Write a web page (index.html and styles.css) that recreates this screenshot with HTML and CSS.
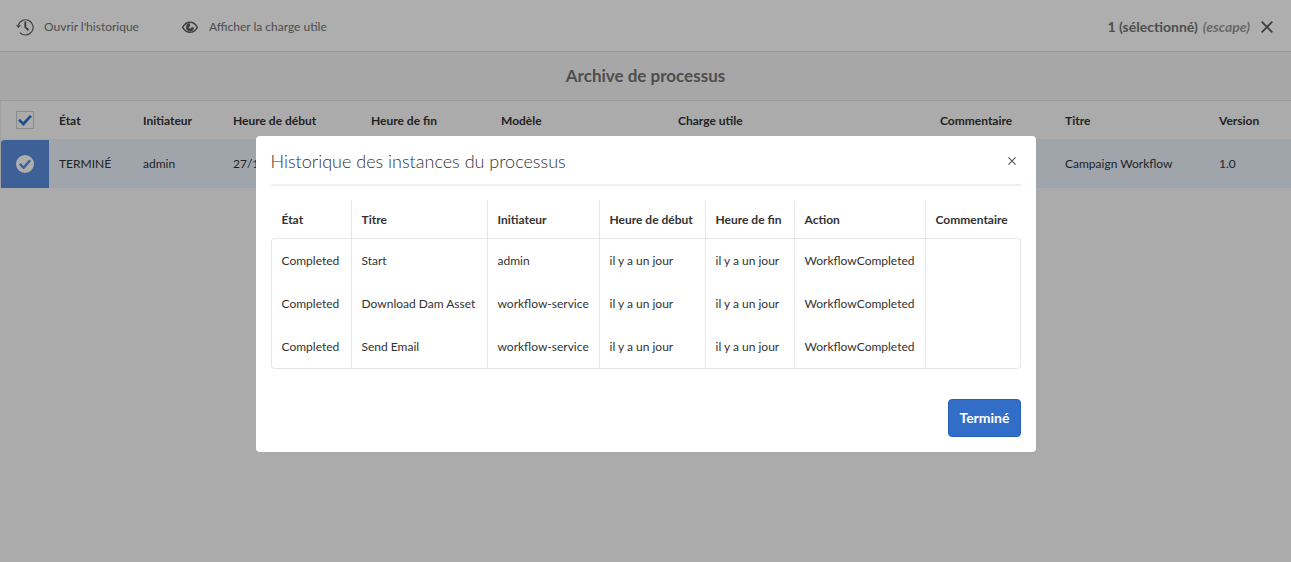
FILE: index.html
```
<!DOCTYPE html>
<html lang="fr">
<head>
<meta charset="utf-8">
<title>Archive de processus</title>
<link rel="stylesheet" href="styles.css">
</head>
<body>
<div class="page">
  <header class="toolbar">
    <button type="button" class="action">
      <svg class="icon" viewBox="0 0 18 18" width="18" height="18" aria-hidden="true"><path d="M2.300 7A7.600 7.600 0 1 1 4 14.600" fill="none" stroke="currentColor" stroke-width="1.200"/><path d="M0 7.200h5L2.400 10z" fill="currentColor"/><path d="M9.300 3.500v5.700l3.200 3" fill="none" stroke="currentColor" stroke-width="1.900"/></svg>
      <span>Ouvrir l'historique</span>
    </button>
    <button type="button" class="action">
      <svg class="icon" viewBox="0 0 18 18" width="18" height="18" aria-hidden="true"><path d="M1.700 9.300C3.400 6.200 5.900 4.300 9 4.300s5.600 1.900 7.300 5c-1.700 3.100-4.200 5-7.300 5s-5.600-1.900-7.300-5z" fill="none" stroke="currentColor" stroke-width="1.400"/><path d="M9 5.300v2.900l-1.500 1.100L9 10.800l1.500-1.500H13a4 4 0 1 1-4-4z" fill="currentColor"/></svg>
      <span>Afficher la charge utile</span>
    </button>
    <div class="selection">
      <span class="count">1 (sélectionné)</span>
      <span class="hint">(escape)</span>
      <button type="button" class="clear" aria-label="Effacer la sélection">
        <svg viewBox="0 0 12 12" width="12" height="12" aria-hidden="true"><path d="M.7.7l10.600 10.600M11.300.7L.7 11.300" stroke="currentColor" stroke-width="1.900"/></svg>
      </button>
    </div>
  </header>
  <h1 class="page-title">Archive de processus</h1>
  <table class="list">
    <colgroup><col class="w-check"><col class="w-state"><col class="w-init"><col class="w-start"><col class="w-end"><col class="w-model"><col class="w-payload"><col class="w-comment"><col class="w-title"><col></colgroup>
    <thead>
      <tr>
        <th class="pick"><input type="checkbox" class="box" checked aria-label="Tout sélectionner"></th>
        <th>État</th><th>Initiateur</th><th>Heure de début</th><th>Heure de fin</th><th>Modèle</th><th>Charge utile</th><th>Commentaire</th><th>Titre</th><th>Version</th>
      </tr>
    </thead>
    <tbody>
      <tr>
        <td class="pick"><input type="checkbox" class="round" checked aria-label="Sélectionner Campaign Workflow"></td>
        <td>TERMINÉ</td><td>admin</td><td>27/10</td><td></td><td></td><td></td><td></td><td>Campaign Workflow</td><td>1.0</td>
      </tr>
    </tbody>
  </table>
</div>

<div class="backdrop">
  <section class="dialog" role="dialog" aria-modal="true" aria-labelledby="dialog-title">
    <header class="dialog-head">
      <h2 id="dialog-title">Historique des instances du processus</h2>
      <button type="button" class="close" aria-label="Fermer">
        <svg viewBox="0 0 8 8" width="8" height="8" aria-hidden="true"><path d="M.4.4l7.200 7.200M7.600.4L.4 7.600" stroke="currentColor" stroke-width="1.200"/></svg>
      </button>
    </header>
    <table class="history">
      <colgroup><col class="h-state"><col class="h-title"><col class="h-init"><col class="h-start"><col class="h-end"><col class="h-action"><col></colgroup>
      <thead>
        <tr><th>État</th><th>Titre</th><th>Initiateur</th><th>Heure de début</th><th>Heure de fin</th><th>Action</th><th>Commentaire</th></tr>
      </thead>
      <tbody>
        <tr><td>Completed</td><td>Start</td><td>admin</td><td>il y a un jour</td><td>il y a un jour</td><td>WorkflowCompleted</td><td></td></tr>
        <tr><td>Completed</td><td>Download Dam Asset</td><td>workflow-service</td><td>il y a un jour</td><td>il y a un jour</td><td>WorkflowCompleted</td><td></td></tr>
        <tr><td>Completed</td><td>Send Email</td><td>workflow-service</td><td>il y a un jour</td><td>il y a un jour</td><td>WorkflowCompleted</td><td></td></tr>
      </tbody>
    </table>
    <footer class="dialog-foot"><button type="button" class="primary">Terminé</button></footer>
  </section>
</div>
</body>
</html>
```
FILE: styles.css
```
* { box-sizing: border-box; }

body {
  margin: 0;
  background: #f5f5f5;
  color: #323232;
  font-family: Lato, "Open Sans", sans-serif;
  font-size: 12px;
  line-height: 18px;
}

button {
  padding: 0;
  border: 0;
  background: none;
  color: inherit;
  font: inherit;
  cursor: pointer;
}

svg { display: block; }

.page { min-height: 100vh; }

.toolbar {
  display: flex;
  align-items: center;
  gap: 42px;
  height: 52px;
  padding: 2px 18px 0 16px;
  border-bottom: 1px solid #dcdcdc;
  background: #fafafa;
  color: #707070;
}

.action {
  display: flex;
  align-items: center;
  gap: 10px;
}

.icon { color: #5c5c5c; }

.selection {
  display: flex;
  align-items: center;
  gap: 5px;
  margin-left: auto;
  font-size: 14px;
  font-weight: 700;
}

.hint { color: #969696; font-style: italic; }
.clear { margin-left: 6px; color: #5c5c5c; }

.page-title {
  margin: 0;
  padding: 12px 0;
  border-bottom: 1px solid #dcdcdc;
  background: #f0f0f0;
  color: #707070;
  font-size: 17px;
  font-weight: 700;
  line-height: 24px;
  text-align: center;
}

table {
  width: 100%;
  border-spacing: 0;
  table-layout: fixed;
}

th, td {
  padding: 0 0 0 10px;
  font-weight: 400;
  text-align: left;
  white-space: nowrap;
}

th { padding-top: 2px; font-weight: 700; }

.list { border-left: 1px solid #e6e6e6; }
.list th { height: 38px; }
.list td { height: 49px; background: #e6ecf5; border-top: 1px solid #ebebeb; }
.list .pick { padding: 0; text-align: center; }
.list td.pick { border-top-left-radius: 4px; background: #588ad8; }

.w-check { width: 48px; }
.w-state { width: 84px; }
.w-init { width: 90px; }
.w-start { width: 138px; }
.w-end { width: 130px; }
.w-model { width: 177px; }
.w-payload { width: 262px; }
.w-comment { width: 125px; }
.w-title { width: 154px; }

.box, .round {
  display: inline-grid;
  place-items: center;
  width: 18px;
  height: 18px;
  margin: 0;
  appearance: none;
  vertical-align: middle;
}

.box { border: 1px solid #c8c8c8; color: #326ec8; }
.round { border-radius: 50%; background: #fafafa; color: #588ad8; }

.box::before, .round::before {
  width: 14px;
  height: 11px;
  background: currentColor;
  clip-path: polygon(0 52%, 14% 35%, 37% 65%, 85% 0, 100% 14%, 39% 100%);
  content: "";
}

.round::before { width: 12px; height: 10px; }

.backdrop {
  position: fixed;
  inset: 0;
  display: flex;
  align-items: flex-start;
  justify-content: center;
  padding-top: 136px;
  background: rgba(0, 0, 0, 0.3);
}

.dialog {
  width: 780px;
  max-width: 100%;
  padding: 0 15px 15px;
  border-radius: 4px;
  background: #fff;
}

.dialog-head {
  display: flex;
  align-items: center;
  justify-content: space-between;
  height: 50px;
  margin-bottom: 14px;
  padding: 2px 5px 0 0;
  border-bottom: 2px solid #f0f0f0;
}

.dialog-head h2 {
  margin: 0;
  font-size: 18px;
  font-weight: 300;
  line-height: 24px;
}

.close { color: #5c5c5c; }

.history th, .history td { height: 43px; border-left: 1px solid #e6e6e6; }
.history th { height: 38px; }
.history th:first-child { border-left-color: transparent; }
.history td:last-child { border-right: 1px solid #e6e6e6; }
.history tbody tr:first-child td { height: 44px; border-top: 1px solid #e6e6e6; }
.history tbody tr:last-child td { height: 44px; border-bottom: 1px solid #e6e6e6; }
.history tbody tr:first-child td:first-child { border-top-left-radius: 4px; }
.history tbody tr:first-child td:last-child { border-top-right-radius: 4px; }
.history tbody tr:last-child td:first-child { border-bottom-left-radius: 4px; }
.history tbody tr:last-child td:last-child { border-bottom-right-radius: 4px; }

.h-state { width: 80px; }
.h-title { width: 136px; }
.h-init { width: 112px; }
.h-start { width: 106px; }
.h-end { width: 89px; }
.h-action { width: 131px; }

.dialog-foot {
  display: flex;
  justify-content: flex-end;
  margin-top: 30px;
}

.primary {
  height: 38px;
  padding: 0 10px;
  border: 1px solid #2361b8;
  border-radius: 4px;
  background: #326ec8;
  color: #fff;
  font-size: 14px;
  font-weight: 700;
}
```
